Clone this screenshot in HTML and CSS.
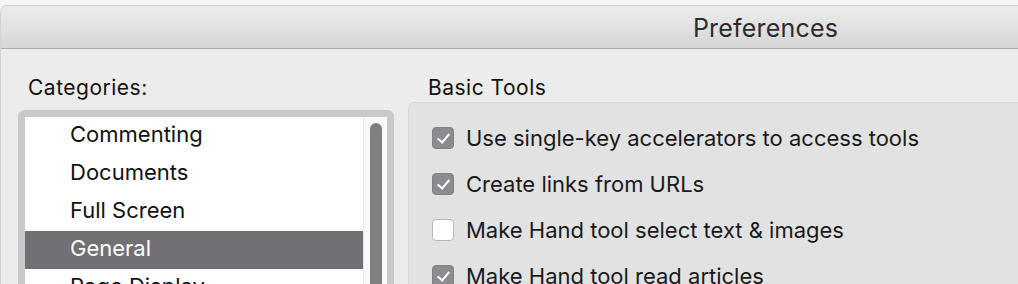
FILE: index.html
```html
<!DOCTYPE html>
<html lang="en">
<head>
  <meta charset="UTF-8">
  <title>Preferences</title>
  <link rel="stylesheet" href="styles.css">
</head>
<body>
  <div class="window">
    <div class="titlebar">Preferences</div>
    <div class="content">
      <div class="sidebar">
        <div class="label">Categories:</div>
        <div class="listbox">
          <ul class="list">
            <li>Commenting</li>
            <li>Documents</li>
            <li>Full Screen</li>
            <li class="selected">General</li>
            <li>Page Display</li>
          </ul>
          <div class="track"><div class="thumb"></div></div>
        </div>
      </div>
      <div class="main">
        <div class="label label-main">Basic Tools</div>
        <div class="group">
          <label class="option"><span class="box checked"></span>Use single-key accelerators to access tools</label>
          <label class="option"><span class="box checked"></span>Create links from URLs</label>
          <label class="option"><span class="box"></span>Make Hand tool select text &amp; images</label>
          <label class="option"><span class="box checked"></span>Make Hand tool read articles</label>
        </div>
      </div>
    </div>
  </div>
</body>
</html>
```

FILE: styles.css
```css
body { margin: 0; background: #f6f6f6; font-family: Inter, "Liberation Sans", sans-serif; color: #1c1c1c; overflow: hidden; height: 284px; }
.window { margin-top: 5px; border-top: 1px solid #cfcfcf; border-left: 1px solid #d2d2d2; border-radius: 7px 0 0 0; background: #ececec; height: 279px; overflow: hidden; }
.titlebar { height: 42px; line-height: 44px; background: linear-gradient(#ececec, #d6d6d6); border-bottom: 1px solid #adadad; padding-left: 512px; text-align: center; font-size: 25px; letter-spacing: 0.2px; color: #2c2c2c; }
.content { display: flex; padding-top: 27px; }
.sidebar { width: 376px; padding-left: 17px; flex-shrink: 0; }
.label { height: 24px; line-height: 24px; font-size: 21px; letter-spacing: 0.5px; padding-left: 10px; margin-bottom: 10px; color: #111; }
.listbox { display: flex; border: 7px solid #c9c9c9; border-bottom: none; border-radius: 7px 7px 0 0; background: #fff; height: 200px; }
.list { list-style: none; margin: 0; padding: 0; flex: 1; }
.list li { height: 38px; line-height: 34px; padding-bottom: 4px; box-sizing: border-box; padding-left: 45px; font-size: 22px; color: #111; white-space: nowrap; }
.list li.selected { background: #717075; color: #fff; }
.track { width: 17px; padding-left: 6px; border-left: 1px solid #e8e8e8; background: #f9f9f9; }
.thumb { width: 12px; height: 200px; margin-top: 6px; border-radius: 6px; background: #7f7f7f; }
.main { flex: 1; margin-left: 14px; }
.label-main { padding-left: 20px; margin-bottom: 2px; }
.group { background: #e2e2e2; border: 1px solid #d6d6d6; border-right: none; border-radius: 6px 0 0 0; padding: 12px 0 0 23px; height: 200px; }
.option { display: flex; align-items: center; height: 46px; font-size: 22px; color: #1a1a1a; white-space: nowrap; }
.box { width: 20px; height: 20px; border: 1px solid #b8b8b8; border-radius: 4px; background: #fff; margin-right: 12px; position: relative; flex-shrink: 0; }
.box.checked { background: #8c8c90; border-color: #818185; }
.box.checked::after { content: ""; position: absolute; left: 7px; top: 3px; width: 5px; height: 10px; border: solid #fff; border-width: 0 2px 2px 0; transform: rotate(40deg); }
```
